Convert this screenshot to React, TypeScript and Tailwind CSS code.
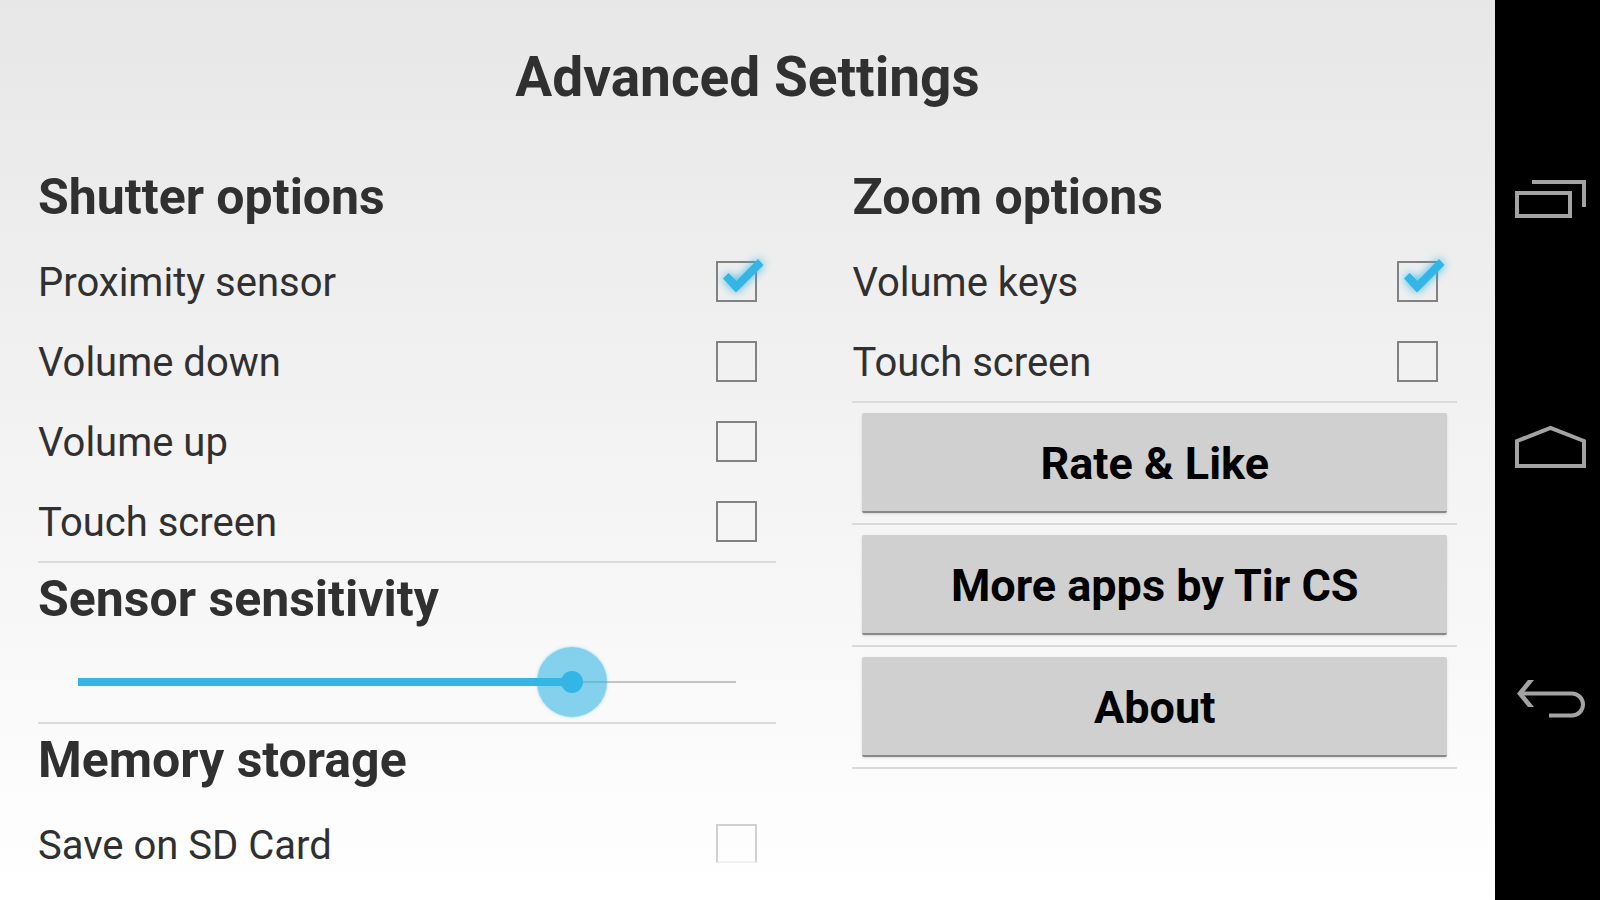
import { useState } from "react";

const shutterOptions = [
  { name: "Proximity sensor", checked: true },
  { name: "Volume down", checked: false },
  { name: "Volume up", checked: false },
  { name: "Touch screen", checked: false },
];

const zoomOptions = [
  { name: "Volume keys", checked: true },
  { name: "Touch screen", checked: false },
];

interface OptionProps {
  name: string;
  defaultChecked?: boolean;
  faded?: boolean;
}

function Option({ name, defaultChecked = false, faded = false }: OptionProps) {
  const [checked, setChecked] = useState(defaultChecked);

  return (
    <label className="flex items-center justify-between h-20 pr-[19px] text-[40px] leading-[48px]">
      <span className="pt-1">{name}</span>
      <span className="relative block size-[41px]">
        <input
          type="checkbox"
          checked={checked}
          onChange={() => setChecked(!checked)}
          className={
            faded
              ? "block appearance-none w-[41px] h-[39px] border-2 border-[#d0d0d0] border-b-[#f0f0f0]"
              : "block appearance-none size-[41px] border-2 border-[#828282]"
          }
        />
        {checked && (
          <svg
            viewBox="0 0 41 41"
            className="absolute inset-0 size-[41px] overflow-visible pointer-events-none drop-shadow-[0_0_5px_#33b5e5]"
          >
            <path d="M7 17.5L12.5 12L20.5 20L42 -2L47.5 4L20 31.5Z" fill="#33b5e5" />
          </svg>
        )}
      </span>
    </label>
  );
}

function Heading({ children }: { children: string }) {
  return <h2 className="text-[50px] leading-[72px] font-bold">{children}</h2>;
}

function SensitivitySlider() {
  const [value, setValue] = useState(75);

  return (
    <div className="relative h-[82px] mx-10">
      <div className="absolute inset-x-0 top-[46px] h-0.5 bg-[#c3c3c3]" />
      <div
        className="absolute left-0 top-[43px] h-2 bg-[#33b5e5]"
        style={{ width: `${value}%` }}
      />
      <div
        className="absolute top-3 -ml-[35px] size-[70px] rounded-full bg-[#33b5e5]/60 flex items-center justify-center shadow-[0_0_3px_#33b5e580]"
        style={{ left: `${value}%` }}
      >
        <div className="size-[22px] rounded-full bg-[#33b5e5]" />
      </div>
      <input
        type="range"
        aria-label="Sensor sensitivity"
        value={value}
        onChange={(e) => setValue(Number(e.target.value))}
        className="absolute inset-0 w-full opacity-0"
      />
    </div>
  );
}

function MenuButton({ children }: { children: string }) {
  return (
    <div className="p-[10px] border-b-2 border-[#dadada]">
      <button className="block w-full h-[100px] pt-1 rounded-xs bg-[#d0d0d0] border-b-2 border-[#888888] text-[45px] leading-[52px] font-bold text-black shadow-sm">
        {children}
      </button>
    </div>
  );
}

function NavigationBar() {
  return (
    <nav className="w-[105px] shrink-0 bg-black flex flex-col items-center justify-between pl-[6px] pt-[180px] pb-[182px] text-[#a3a3a3]">
      <button aria-label="Recent apps">
        <svg viewBox="0 0 71 38" className="block w-[71px] h-[38px]" fill="none" stroke="currentColor" strokeWidth="4">
          <path d="M2 13H55V36H2Z M17 2H69V27" />
        </svg>
      </button>
      <button aria-label="Home">
        <svg viewBox="0 0 71 48" className="block w-[71px] h-12" fill="none" stroke="currentColor" strokeWidth="4">
          <path d="M2 16V41H69V16L35.5 3Z" />
        </svg>
      </button>
      <button aria-label="Back">
        <svg viewBox="0 0 71 38" className="block w-[71px] h-[38px]">
          <path d="M2 13.5L13 0H19L8 13.5L19 27H13Z" fill="currentColor" />
          <path d="M6 13.5H57A11 11 0 0 1 57 35.5H34" fill="none" stroke="currentColor" strokeWidth="4" />
        </svg>
      </button>
    </nav>
  );
}

function App() {
  return (
    <div className="flex h-screen overflow-hidden font-[Roboto,sans-serif] text-[#303030]">
      <main className="flex-1 px-[38px] bg-linear-to-b from-[#e7e7e7] to-white">
        <h1 className="pt-[45px] text-[55px] leading-[64px] font-bold text-center">Advanced Settings</h1>
        <div className="mt-[52px] flex gap-[76px]">
          <section className="flex-[739]">
            <Heading>Shutter options</Heading>
            <div className="pt-2 border-b-2 border-[#dadada]">
              {shutterOptions.map((option) => (
                <Option key={option.name} name={option.name} defaultChecked={option.checked} />
              ))}
            </div>
            <Heading>Sensor sensitivity</Heading>
            <div className="pb-[5px] border-b-2 border-[#dadada]">
              <SensitivitySlider />
            </div>
            <Heading>Memory storage</Heading>
            <div className="pt-2">
              <Option name="Save on SD Card" faded />
            </div>
          </section>
          <section className="flex-[605]">
            <Heading>Zoom options</Heading>
            <div className="pt-2 border-b-2 border-[#dadada]">
              {zoomOptions.map((option) => (
                <Option key={option.name} name={option.name} defaultChecked={option.checked} />
              ))}
            </div>
            <MenuButton>Rate & Like</MenuButton>
            <MenuButton>More apps by Tir CS</MenuButton>
            <MenuButton>About</MenuButton>
          </section>
        </div>
      </main>
      <NavigationBar />
    </div>
  );
}

export default App;
